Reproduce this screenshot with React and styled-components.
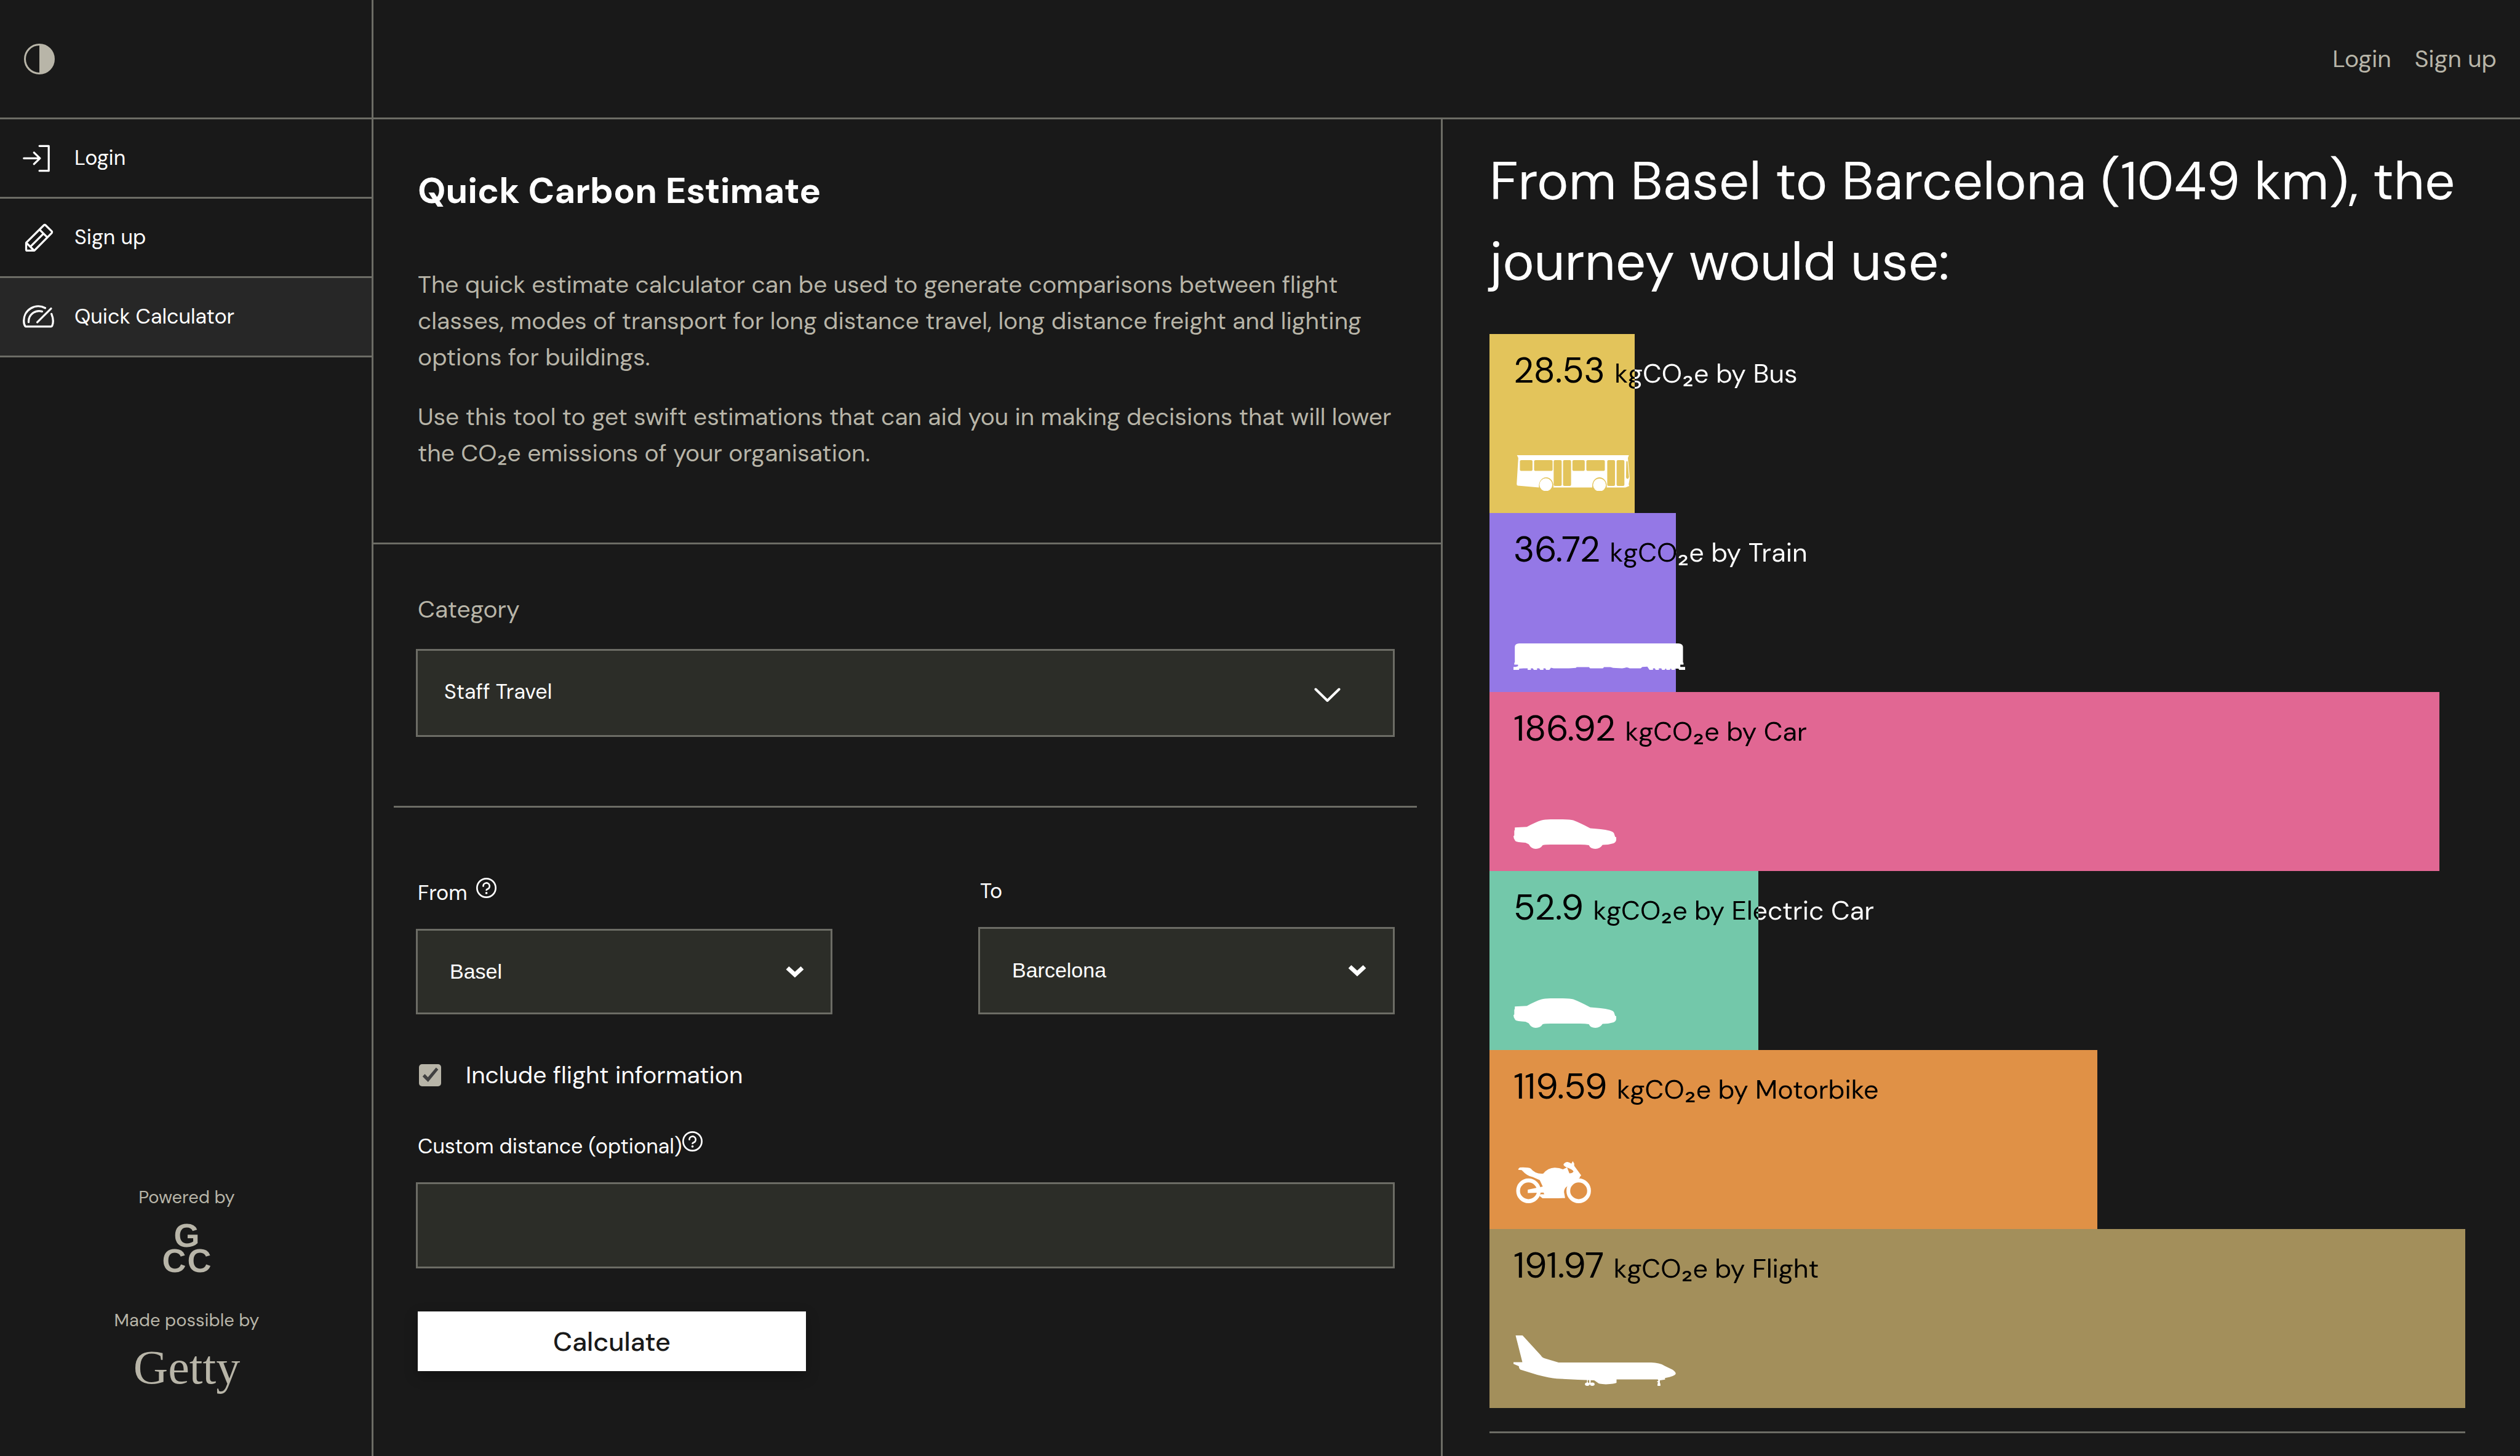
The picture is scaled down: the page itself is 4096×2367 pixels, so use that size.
import React, { useState } from "react";
import styled, { createGlobalStyle, ThemeProvider } from "styled-components";

const theme = {
  bg: "#191919",
  active: "#272727",
  line: "#6c6c65",
  muted: "#b8b5a8",
  text: "#ffffff",
  field: "#2c2d28",
  sans: '"DM Sans", Inter, "Liberation Sans", sans-serif',
  system: '"Liberation Sans", Arial, sans-serif',
  serif: '"Liberation Serif", "Times New Roman", serif',
};

const GlobalStyle = createGlobalStyle`
  * { box-sizing: border-box; }
  body {
    margin: 0;
    background: ${theme.bg};
    color: ${theme.text};
    font-family: ${theme.sans};
  }
`;

/* ---------- shell ---------- */

const Shell = styled.div`
  display: grid;
  grid-template-columns: 607px minmax(0, 1fr);
  grid-template-rows: 194px 1fr;
  min-height: 100vh;
`;

const Corner = styled.div`
  display: flex;
  align-items: center;
  padding-left: 39px;
  border-right: 3px solid ${(p) => p.theme.line};
  border-bottom: 3px solid ${(p) => p.theme.line};
`;

const ContrastButton = styled.button`
  display: flex;
  padding: 0;
  border: 0;
  background: none;
  color: ${(p) => p.theme.muted};
  cursor: pointer;
`;

const TopBar = styled.header`
  display: flex;
  align-items: center;
  justify-content: flex-end;
  gap: 38px;
  padding-right: 38px;
  border-bottom: 3px solid ${(p) => p.theme.line};
`;

const TopLink = styled.a`
  color: ${(p) => p.theme.muted};
  font-size: 39px;
  line-height: 48px;
  text-decoration: none;
`;

const Sidebar = styled.aside`
  display: flex;
  flex-direction: column;
  border-right: 3px solid ${(p) => p.theme.line};
`;

const SideNav = styled.nav`
  display: flex;
  flex-direction: column;
`;

const SideLink = styled.a`
  display: flex;
  align-items: center;
  gap: 33px;
  height: 129px;
  padding: 0 37px;
  border-bottom: 3px solid ${(p) => p.theme.line};
  background: ${(p) => (p.$active ? p.theme.active : "transparent")};
  color: ${(p) => p.theme.text};
  font-size: 34px;
  line-height: 48px;
  text-decoration: none;
`;

const SideIcon = styled.svg`
  flex: none;
  width: 51px;
  height: 51px;
  fill: none;
  stroke: currentColor;
  stroke-width: 13;
  stroke-linecap: round;
  stroke-linejoin: round;
`;

const Credits = styled.footer`
  display: flex;
  flex-direction: column;
  align-items: center;
  margin-top: auto;
  padding: 0 0 104px 3px;
  color: ${(p) => p.theme.muted};
`;

const CreditLine = styled.p`
  margin: 0;
  font-size: 29px;
  line-height: 34px;
`;

const GccLogo = styled.div`
  display: flex;
  flex-direction: column;
  align-items: center;
  margin: 25px 0 59px;
  font-family: ${(p) => p.theme.system};
  font-size: 54px;
  font-weight: 700;
  line-height: 41px;
`;

const LogoRow = styled.div`
  display: flex;
  gap: 2px;
`;

const GettyLogo = styled.div`
  margin-top: 20px;
  font-family: ${(p) => p.theme.serif};
  font-size: 78px;
  line-height: 80px;
`;

/* ---------- calculator ---------- */

const Content = styled.main`
  display: grid;
  grid-template-columns: minmax(0, 1738fr) minmax(0, 1751fr);
`;

const FormPanel = styled.section`
  border-right: 3px solid ${(p) => p.theme.line};
`;

const Intro = styled.div`
  padding: 78px 70px 116px 72px;
  border-bottom: 3px solid ${(p) => p.theme.line};
`;

const Title = styled.h1`
  margin: 0 0 84px;
  font-size: 58px;
  font-weight: 700;
  line-height: 77px;
`;

const Paragraph = styled.p`
  margin: 0;
  color: ${(p) => p.theme.muted};
  font-size: 39px;
  line-height: 59px;

  & + & {
    margin-top: 38px;
  }
`;

const CategoryBlock = styled.div`
  padding: 76px 75px 112px 69px;
`;

const CategoryLabel = styled.label`
  display: block;
  margin-bottom: 35px;
  padding-left: 3px;
  color: ${(p) => p.theme.muted};
  font-size: 39px;
  line-height: 59px;
`;

const Divider = styled.hr`
  margin: ${(p) => (p.$inset ? "0 39px 0 33px" : "38px 0 0")};
  border: 0;
  border-top: 3px solid ${(p) => p.theme.line};
`;

const Fields = styled.form`
  padding: 111px 75px 60px 69px;
`;

const Pair = styled.div`
  display: grid;
  grid-template-columns: 1fr 1fr;
  gap: 237px;
`;

const Field = styled.div`
  display: flex;
  flex-direction: column;
  gap: 33px;
`;

const FieldLabel = styled.label`
  display: flex;
  align-items: flex-end;
  gap: ${(p) => (p.$tight ? "1px" : "14px")};
  padding-left: 3px;
  font-size: 34px;
  line-height: 50px;
`;

const HelpIcon = styled.svg`
  width: 33px;
  height: 33px;
  margin: 3px 0 17px;
  fill: none;
  stroke: currentColor;
  stroke-width: 2.6;
  stroke-linecap: round;
`;

const SelectWrap = styled.div`
  flex: 1;
  display: grid;
  align-items: center;

  & > * {
    grid-area: 1 / 1;
  }
`;

const Select = styled.select`
  align-self: stretch;
  width: 100%;
  min-height: ${(p) => (p.$large ? "143px" : "139px")};
  padding: ${(p) => (p.$large ? "0 130px 4px 43px" : "0 110px 2px 52px")};
  appearance: none;
  border: 3px solid ${(p) => p.theme.line};
  border-radius: 0;
  background: ${(p) => p.theme.field};
  color: ${(p) => p.theme.text};
  font-family: ${(p) => (p.$large ? p.theme.sans : p.theme.system)};
  font-size: 34px;
`;

const Arrow = styled.svg`
  justify-self: end;
  margin-right: ${(p) => (p.$large ? "88px" : "46px")};
  fill: none;
  stroke: currentColor;
  pointer-events: none;
`;

const CheckRow = styled.label`
  display: flex;
  align-items: center;
  gap: 40px;
  margin: 69px 0 59px;
  padding-left: 5px;
  font-size: 39px;
  line-height: 59px;
`;

const CheckBox = styled.span`
  display: grid;

  & > * {
    grid-area: 1 / 1;
    width: 36px;
    height: 36px;
  }
`;

const CheckInput = styled.input`
  margin: 0;
  appearance: none;
  border-radius: 5px;
  background: ${(p) => p.theme.muted};
`;

const Tick = styled.svg`
  fill: #414141;
  pointer-events: none;
`;

const TextInput = styled.input`
  width: 100%;
  height: 140px;
  padding: 0 42px;
  border: 3px solid ${(p) => p.theme.line};
  border-radius: 0;
  background: ${(p) => p.theme.field};
  color: ${(p) => p.theme.text};
  font-family: ${(p) => p.theme.sans};
  font-size: 34px;
`;

const Submit = styled.button`
  width: 631px;
  height: 97px;
  margin: 70px 0 0 3px;
  padding: 0;
  border: 0;
  background: #ffffff;
  box-shadow: 0 8px 20px rgba(0, 0, 0, 0.25);
  color: ${(p) => p.theme.bg};
  font-family: ${(p) => p.theme.sans};
  font-size: 43px;
  font-weight: 500;
  cursor: pointer;
`;

/* ---------- results ---------- */

const Results = styled.section`
  padding: 35px 89px 0 76px;
`;

const ResultsTitle = styled.h2`
  margin: 0 0 52px;
  font-size: 87px;
  font-weight: 400;
  line-height: 131px;
`;

const Chart = styled.ul`
  display: grid;
  grid-auto-rows: 291px;
  margin: 0;
  padding: 0;
  list-style: none;
`;

const ChartRow = styled.li`
  display: grid;

  & > * {
    grid-area: 1 / 1;
  }
`;

const Bar = styled.div`
  background: ${(p) => p.$color};
`;

const RowContent = styled.div`
  display: flex;
  flex-direction: column;
  justify-content: space-between;
  align-items: flex-start;
  padding: 25px 0 36px;
`;

/* The caption is black over its bar and white past the end of it. */
const Caption = styled.div`
  width: 100%;
  padding-left: 39px;
  background: linear-gradient(to right, #000 var(--share), #fff var(--share));
  background-clip: text;
  -webkit-text-fill-color: transparent;
  font-size: 58px;
  line-height: 68px;
`;

const Unit = styled.span`
  font-size: 43px;
`;

const Vehicle = styled.svg`
  margin-left: 39px;
  fill: #ffffff;
`;

/* ---------- drawings ---------- */

const LoginIcon = () => (
  <SideIcon viewBox="55 44 203 203" aria-hidden="true">
    <path d="M163 65H223V226H163M62 145H166M128 108L166 145L128 182" />
  </SideIcon>
);

const PencilIcon = () => (
  <SideIcon viewBox="55 556 203 203" aria-hidden="true">
    <path d="M77 690L192 576Q197 572 202 576L243 616Q247 621 243 626L130 741H83Q77 741 77 735ZM165 606L212 653M188 632L104 716M80 692L128 740" />
  </SideIcon>
);

const GaugeIcon = () => (
  <SideIcon viewBox="55 1060 203 203" aria-hidden="true">
    <path d="M200 1103A93 93 0 0 0 62 1186Q62 1208 70 1219Q72 1223 77 1223H237Q243 1223 245 1218Q259 1185 241 1141M180 1125A68 68 0 0 0 93 1194M149 1195L238 1106" />
  </SideIcon>
);

const Help = () => (
  <HelpIcon viewBox="0 0 32 32" role="img" aria-label="Help">
    <circle cx="16" cy="16" r="14.7" />
    <path d="M11.1 13.2A5 5 0 1 1 18 17.8Q16.1 18.4 16.1 19.4" />
    <circle cx="16.1" cy="24" r="1.8" fill="currentColor" stroke="none" />
  </HelpIcon>
);

const SmallArrow = () => (
  <Arrow width="30" height="20" viewBox="0 0 30 20" strokeWidth="7" aria-hidden="true">
    <path d="M3 3.5L15 14.5L27 3.5" />
  </Arrow>
);

const Bus = ({ color }) => (
  <Vehicle width="189" height="58" viewBox="112 566 434 145" preserveAspectRatio="none" aria-hidden="true">
    <path d="M125 566H543L539 577L546 660L542 684L544 691L530 697H460V690A27 34 0 0 0 406 690V697H261V690A27 34 0 0 0 207 690V697L128 690Q124 689 124 683L130 577Z" />
    <ellipse cx="233" cy="686" rx="24" ry="26" />
    <ellipse cx="433" cy="687" rx="24" ry="26" />
    <g fill={color}>
      <rect x="136" y="586" width="47" height="44" rx="6" />
      <rect x="189" y="586" width="69" height="44" rx="6" />
      <rect x="262" y="586" width="30" height="105" rx="5" />
      <rect x="297" y="586" width="30" height="105" rx="5" />
      <rect x="332" y="586" width="46" height="44" rx="6" />
      <rect x="384" y="586" width="69" height="44" rx="6" />
      <rect x="462" y="586" width="29" height="105" rx="5" />
      <rect x="497" y="586" width="29" height="105" rx="5" />
      <path d="M533 593Q536 587 538 593L543 655Q542 662 537 662Q532 661 532 655Z" />
    </g>
  </Vehicle>
);

const Train = () => (
  <Vehicle width="279" height="43" viewBox="112 1339 641 107" preserveAspectRatio="none" aria-hidden="true">
    <path d="M117 1352Q118 1340 133 1339H728Q743 1340 745 1352V1417H747V1425H735V1434H753V1446H731L728 1441H715V1446H703L700 1440L695 1446H684L681 1440L676 1446H667L664 1440H655V1446H643L640 1440H633V1446H620L612 1433L593 1434L587 1440H546Q536 1433 528 1438L518 1440L484 1438L474 1435H450L446 1440H398L394 1435H348L345 1438L320 1440L310 1440H262L252 1437L246 1446H234L231 1440H224V1446H212L208 1440H200V1446H188L184 1440H177V1446H165V1440H150L133 1441V1446H112V1434H120L129 1431V1425H115V1417H117Z" />
  </Vehicle>
);

const Car = () => (
  <Vehicle width="167" height="48" viewBox="112 163 383 185" preserveAspectRatio="none" aria-hidden="true">
    <path d="M117 214L162 210Q196 180 215 170Q228 163 250 163H292Q325 163 335 169Q360 185 398 219Q440 223 470 234Q485 240 487 252L491 273L495 275V292Q494 307 485 313Q465 323 444 323Q435 348 417 348T393 325Q380 321 360 321H250Q230 321 221 325Q212 348 195 348T169 319L157 309Q125 308 119 299Q112 285 112 268L115 264V235L117 228Z" />
  </Vehicle>
);

const Motorbike = () => (
  <Vehicle width="126" height="74" viewBox="167 124 434 238" preserveAspectRatio="none" aria-hidden="true">
    <g fill="none" stroke="#ffffff" strokeWidth="21">
      <ellipse cx="251" cy="278" rx="58" ry="54" />
      <ellipse cx="532" cy="278" rx="58" ry="54" />
    </g>
    <path d="M193 165L202 156Q250 154 264 162Q290 192 333 188Q360 158 398 157Q425 158 444 166L467 155L480 187Q498 186 503 177Q500 168 470 157Q447 150 447 139Q455 128 470 127Q485 130 491 136L499 123L507 135V147L546 197L538 206V210L527 217L500 222Q475 248 467 255Q450 264 450 285L456 315Q440 317 400 317H330L313 305L318 296H340L335 287L247 290V272L331 256L314 222L275 206Q245 203 213 170L195 168Z" />
  </Vehicle>
);

const Plane = () => (
  <Vehicle width="264" height="82" viewBox="167 1039 911 264" preserveAspectRatio="none" aria-hidden="true">
    <path d="M179 1039H218L320 1143Q328 1156 342 1159L420 1181H940Q985 1182 1015 1198L1058 1218Q1078 1230 1077 1240Q1073 1252 1017 1262V1270L988 1274V1288L991 1292V1303H975V1292L979 1286L971 1281L980 1276L976 1269H745V1287Q735 1292 685 1295Q640 1293 640 1287L620 1274L530 1271L410 1265Q370 1262 300 1245L205 1218Q197 1212 197 1200L167 1188V1179H217Z" />
    <path d="M580 1268H586L583 1280L586 1292H578ZM592 1268H600V1294H592Z" />
    <ellipse cx="581" cy="1294" rx="13" ry="9" />
    <ellipse cx="609" cy="1294" rx="13" ry="9" />
  </Vehicle>
);

/* ---------- data ---------- */

const NAV = [
  { label: "Login", Icon: LoginIcon },
  { label: "Sign up", Icon: PencilIcon },
  { label: "Quick Calculator", Icon: GaugeIcon, active: true },
];

const JOURNEYS = [
  { mode: "Bus", value: 28.53, color: "#e3c45b", Drawing: Bus },
  { mode: "Train", value: 36.72, color: "#9478e6", Drawing: Train },
  { mode: "Car", value: 186.92, color: "#e16793", Drawing: Car },
  { mode: "Electric Car", value: 52.9, color: "#73c8aa", Drawing: Car },
  { mode: "Motorbike", value: 119.59, color: "#e09146", Drawing: Motorbike },
  { mode: "Flight", value: 191.97, color: "#a38f5b", Drawing: Plane },
];

const LARGEST = Math.max(...JOURNEYS.map((j) => j.value));

export default function App() {
  const [flights, setFlights] = useState(true);

  return (
    <ThemeProvider theme={theme}>
      <GlobalStyle />
      <Shell>
        <Corner>
          <ContrastButton type="button" aria-label="Toggle contrast">
            <svg width="50" height="50" viewBox="0 0 50 50">
              <circle cx="25" cy="25" r="23.5" fill="none" stroke="currentColor" strokeWidth="3" />
              <path d="M25 1A24 24 0 0 1 25 49Z" fill="currentColor" />
            </svg>
          </ContrastButton>
        </Corner>
        <TopBar>
          <TopLink href="#login">Login</TopLink>
          <TopLink href="#signup">Sign up</TopLink>
        </TopBar>

        <Sidebar>
          <SideNav>
            {NAV.map(({ label, Icon, active }) => (
              <SideLink key={label} href="#" $active={active}>
                <Icon />
                {label}
              </SideLink>
            ))}
          </SideNav>
          <Credits>
            <CreditLine>Powered by</CreditLine>
            <GccLogo>
              <LogoRow>
                <span>G</span>
              </LogoRow>
              <LogoRow>
                <span>C</span>
                <span>C</span>
              </LogoRow>
            </GccLogo>
            <CreditLine>Made possible by</CreditLine>
            <GettyLogo>Getty</GettyLogo>
          </Credits>
        </Sidebar>

        <Content>
          <FormPanel>
            <Intro>
              <Title>Quick Carbon Estimate</Title>
              <Paragraph>
                The quick estimate calculator can be used to generate comparisons between flight
                classes, modes of transport for long distance travel, long distance freight and
                lighting options for buildings.
              </Paragraph>
              <Paragraph>
                Use this tool to get swift estimations that can aid you in making decisions that
                will lower the CO₂e emissions of your organisation.
              </Paragraph>
            </Intro>

            <CategoryBlock>
              <CategoryLabel htmlFor="category">Category</CategoryLabel>
              <SelectWrap>
                <Select id="category" $large defaultValue="Staff Travel">
                  <option>Staff Travel</option>
                </Select>
                <Arrow
                  $large
                  width="43"
                  height="30"
                  viewBox="0 0 43 30"
                  strokeWidth="4"
                  strokeLinecap="round"
                  strokeLinejoin="round"
                  aria-hidden="true"
                >
                  <path d="M2.5 8.5L21.5 27L40.5 8.5" />
                </Arrow>
              </SelectWrap>
            </CategoryBlock>
            <Divider $inset />

            <Fields onSubmit={(e) => e.preventDefault()}>
              <Pair>
                <Field>
                  <FieldLabel htmlFor="from">
                    From
                    <Help />
                  </FieldLabel>
                  <SelectWrap>
                    <Select id="from" defaultValue="Basel">
                      <option>Basel</option>
                    </Select>
                    <SmallArrow />
                  </SelectWrap>
                </Field>
                <Field>
                  <FieldLabel htmlFor="to">To</FieldLabel>
                  <SelectWrap>
                    <Select id="to" defaultValue="Barcelona">
                      <option>Barcelona</option>
                    </Select>
                    <SmallArrow />
                  </SelectWrap>
                </Field>
              </Pair>

              <CheckRow>
                <CheckBox>
                  <CheckInput
                    type="checkbox"
                    checked={flights}
                    onChange={(e) => setFlights(e.target.checked)}
                  />
                  {flights && (
                    <Tick viewBox="0 0 36 36" aria-hidden="true">
                      <path d="M5.8 20L9.5 16L14.5 21.2L27.8 5.5L31.4 8.8L14.8 29Z" />
                    </Tick>
                  )}
                </CheckBox>
                Include flight information
              </CheckRow>

              <Field>
                <FieldLabel htmlFor="distance" $tight>
                  Custom distance (optional)
                  <Help />
                </FieldLabel>
                <TextInput id="distance" type="text" />
              </Field>

              <Submit type="submit">Calculate</Submit>
            </Fields>
          </FormPanel>

          <Results>
            <ResultsTitle>From Basel to Barcelona (1049 km), the journey would use:</ResultsTitle>
            <Chart>
              {JOURNEYS.map(({ mode, value, color, Drawing }) => {
                const share = `${(value / LARGEST) * 100}%`;
                return (
                  <ChartRow key={mode}>
                    <Bar $color={color} style={{ width: share }} />
                    <RowContent>
                      <Caption style={{ "--share": share }}>
                        {value} <Unit>kgCO₂e by {mode}</Unit>
                      </Caption>
                      <Drawing color={color} />
                    </RowContent>
                  </ChartRow>
                );
              })}
            </Chart>
            <Divider />
          </Results>
        </Content>
      </Shell>
    </ThemeProvider>
  );
}
